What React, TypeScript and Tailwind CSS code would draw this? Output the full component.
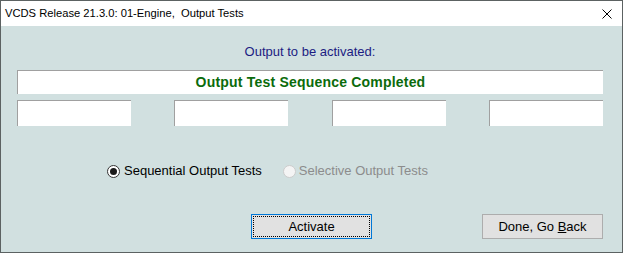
import React, { useState } from 'react';

export default function App() {
  const [mode] = useState<'seq' | 'sel'>('seq');

  return (
    <div className="w-[623px] h-[253px] flex flex-col border border-[#5c6262] bg-white">
      {/* Title bar */}
      <div className="h-[25px] flex items-center justify-between bg-white pl-[4px] pr-[10px]">
        <span className="text-[11.2px] text-black leading-none" style={{ fontFamily: '"Liberation Sans", Arial, sans-serif' }}>
          VCDS Release 21.3.0: 01-Engine,&nbsp; Output Tests
        </span>
        <svg width="10" height="10" viewBox="0 0 10 10" className="mt-[1px]">
          <path d="M0.5 0.5 L9.5 9.5 M9.5 0.5 L0.5 9.5" stroke="#000" strokeWidth="1" />
        </svg>
      </div>

      {/* Dialog body */}
      <div
        className="flex-1 flex flex-col bg-[#d1e0e0] pl-[16px] pr-[19px]"
        style={{ fontFamily: '"Liberation Sans", Arial, sans-serif' }}
      >
        <div className="mt-[18px] h-[15px] text-center text-[13px] leading-[15px] text-[#1c1c82]">
          Output to be activated:
        </div>

        <div className="mt-[11px] h-[24px] bg-white border-t border-l border-[#a0a0a0] flex items-center justify-center">
          <span className="text-[14px] font-bold tracking-[0.2px] text-[#0b6b0b]">Output Test Sequence Completed</span>
        </div>

        <div className="mt-[6px] flex justify-between">
          {[0, 1, 2, 3].map((i) => (
            <div key={i} className="w-[114px] h-[26px] bg-white border-t border-l border-[#a0a0a0]" />
          ))}
        </div>

        {/* Radio buttons */}
        <div className="mt-[38px] h-[14px] flex items-center pl-[90px] text-[13px]">
          <label className="flex items-center gap-[4px] text-black">
            <span className="w-[13px] h-[13px] rounded-full border border-[#333] bg-white flex items-center justify-center">
              {mode === 'seq' && <span className="w-[7px] h-[7px] rounded-full bg-[#1a1a1a]" />}
            </span>
            Sequential Output Tests
          </label>
          <label className="ml-[21px] flex items-center gap-[3px] text-[#8c8c8c]">
            <span className="w-[13px] h-[13px] rounded-full border border-[#cccccc] bg-[#f4f4f4]" />
            Selective Output Tests
          </label>
        </div>

        {/* Buttons */}
        <div className="mt-[36px] flex pl-[234px]">
          <button className="w-[121px] h-[25px] bg-[#e1e1e1] border border-[#0078d7] p-[1px] text-[13px] text-black">
            <span className="w-full h-full flex items-center justify-center border border-dotted border-black">
              Activate
            </span>
          </button>
          <button className="ml-auto w-[121px] h-[25px] bg-[#e1e1e1] border border-[#adadad] text-[13px] text-black flex items-center justify-center">
            Done, Go&nbsp;<span className="underline">B</span>ack
          </button>
        </div>
      </div>
    </div>
  );
}
